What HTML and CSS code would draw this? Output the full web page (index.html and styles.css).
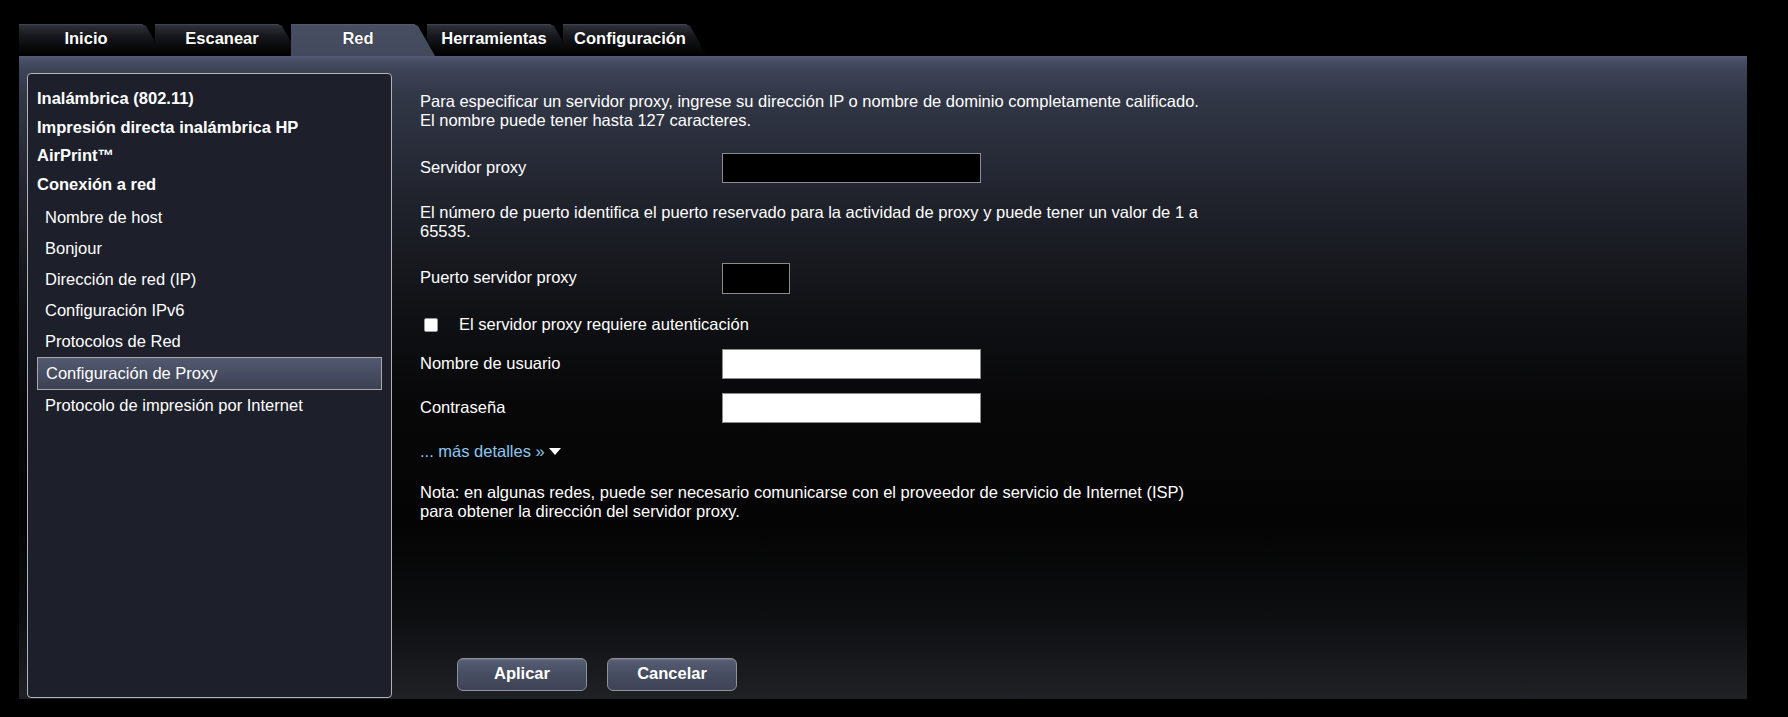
FILE: index.html
```html
<!DOCTYPE html>
<html lang="es">
<head>
<meta charset="utf-8">
<title>Configuración de Proxy</title>
<link rel="stylesheet" href="styles.css">
</head>
<body>
<div class="page">
  <nav class="tabs">
    <a class="tab">Inicio</a>
    <a class="tab">Escanear</a>
    <a class="tab active">Red</a>
    <a class="tab">Herramientas</a>
    <a class="tab">Configuración</a>
  </nav>
  <div class="panel">
    <aside class="sidebar">
      <div class="group">Inalámbrica (802.11)</div>
      <div class="group">Impresión directa inalámbrica HP</div>
      <div class="group">AirPrint™</div>
      <div class="group">Conexión a red</div>
      <ul class="sublist">
        <li class="item">Nombre de host</li>
        <li class="item">Bonjour</li>
        <li class="item">Dirección de red (IP)</li>
        <li class="item">Configuración IPv6</li>
        <li class="item">Protocolos de Red</li>
        <li class="item selected">Configuración de Proxy</li>
        <li class="item">Protocolo de impresión por Internet</li>
      </ul>
    </aside>
    <main class="content">
      <p class="para intro">Para especificar un servidor proxy, ingrese su dirección IP o nombre de dominio completamente calificado.<br>El nombre puede tener hasta 127 caracteres.</p>
      <div class="row row-server">
        <label class="label">Servidor proxy</label>
        <input class="field dark" type="text">
      </div>
      <p class="para port-text">El número de puerto identifica el puerto reservado para la actividad de proxy y puede tener un valor de 1 a<br>65535.</p>
      <div class="row row-port">
        <label class="label">Puerto servidor proxy</label>
        <input class="field dark port" type="text">
      </div>
      <div class="check-row">
        <input class="check" type="checkbox">
        <span class="check-label">El servidor proxy requiere autenticación</span>
      </div>
      <div class="row row-user">
        <label class="label">Nombre de usuario</label>
        <input class="field light" type="text">
      </div>
      <div class="row row-pass">
        <label class="label">Contraseña</label>
        <input class="field light" type="password">
      </div>
      <div class="more">... más detalles » <span class="caret"></span></div>
      <p class="para note">Nota: en algunas redes, puede ser necesario comunicarse con el proveedor de servicio de Internet (ISP)<br>para obtener la dirección del servidor proxy.</p>
      <div class="buttons">
        <button class="btn">Aplicar</button>
        <button class="btn">Cancelar</button>
      </div>
    </main>
  </div>
</div>
</body>
</html>
```
FILE: styles.css
```css
* { box-sizing: border-box; }
html, body { margin: 0; padding: 0; background: #000; }
body {
  font-family: "Liberation Sans", Arial, sans-serif;
  font-size: 16.5px;
  line-height: 19px;
  color: #fff;
  width: 1788px;
  height: 717px;
  overflow: hidden;
}
.page { padding: 24px 0 0 19px; }

/* Tabs */
.tabs { display: flex; height: 32px; }
.tab {
  width: 144px;
  height: 32px;
  margin-right: -8px;
  padding: 0 10px 3px 0;
  display: flex;
  align-items: center;
  justify-content: center;
  font-weight: bold;
  color: #fff;
  text-shadow: 0 0 1px #000;
  clip-path: polygon(0 0, 123px 0, 127px 2px, 144px 100%, 0 100%);
  background: linear-gradient(#454854 0, #2c2e36 2px, #17181d 12px, #08080a 24px, #000 100%);
  position: relative;
}
.tab.active {
  z-index: 1;
  background: linear-gradient(#555b70 0, #484e61 2px, #434a5c 100%);
}

/* Panel */
.panel {
  width: 1728px;
  height: 643px;
  display: flex;
  padding: 17px 0 1px 8px;
  background: linear-gradient(to bottom,
    #555d76 0px, #484e64 4px, #3d4357 14px, #323747 40px,
    #272b37 100px, #1f222b 150px, #111216 250px, #070708 350px,
    #040404 470px, #0d0e10 560px, #1f2125 643px);
}

/* Sidebar */
.sidebar {
  width: 365px;
  border: 1px solid #b2b2b2;
  border-radius: 4px;
  background: #1d1f2b;
  padding: 10px 9px 0 9px;
}
.group {
  font-weight: bold;
  padding: 5px 0 4.5px;
}
.sublist {
  list-style: none;
  margin: 4px 0 0 0;
  padding: 0;
}
.item {
  padding: 6px 0 6px 8px;
}
.item.selected {
  border: 1px solid #a8a8a8;
  padding-left: 8px;
  background: linear-gradient(#535a70, #454b5e 60%, #3b4050);
}

/* Content */
.content {
  flex: 1;
  display: flex;
  flex-direction: column;
  padding: 19px 0 7px 28px;
}
.para { margin: 0; }
.row { display: flex; align-items: center; }
.label { width: 302px; flex: none; padding-bottom: 2px; }
.field {
  width: 259px;
  height: 30px;
  border: 1px solid #8c8c8c;
  margin: 0;
  padding: 0 4px;
  font: inherit;
}
.field.dark { background: #000; color: #fff; }
.field.light { background: #fff; color: #000; }
.field.port { width: 68px; height: 31px; }

.row-server { margin-top: 23px; }
.port-text { margin-top: 20px; }
.row-port { margin-top: 22px; }
.check-row { display: flex; align-items: center; margin-top: 21px; }
.check {
  appearance: none;
  -webkit-appearance: none;
  width: 14px;
  height: 14px;
  margin: 0 0 0 4px;
  background: #fff;
  border: 1px solid #9a9a9a;
  border-radius: 2px;
}
.check-label { margin-left: 21px; }
.row-user { margin-top: 15px; }
.row-pass { margin-top: 14px; }
.more { margin-top: 19px; color: #8ec6ee; display: flex; align-items: center; }
.caret {
  display: inline-block;
  margin-left: 4px;
  width: 0;
  height: 0;
  border-left: 6px solid transparent;
  border-right: 6px solid transparent;
  border-top: 7px solid #fff;
}
.note { margin-top: 22px; }

.buttons {
  margin-top: auto;
  padding-left: 37px;
  display: flex;
  gap: 20px;
}
.btn {
  width: 130px;
  height: 33px;
  border: 1px solid #8e9199;
  border-radius: 6px;
  background: linear-gradient(#6a7189 0, #555c72 2px, #484e62 45%, #3e4456 100%);
  color: #fff;
  font: bold 16.5px "Liberation Sans", Arial, sans-serif;
  padding: 0 0 3px 0;
}
```
